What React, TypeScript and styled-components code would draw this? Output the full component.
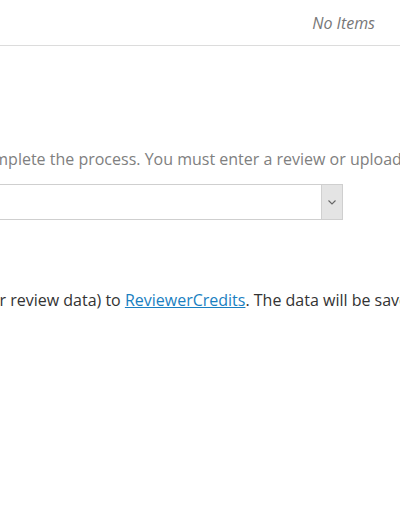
import styled, { createGlobalStyle } from 'styled-components';

const GlobalStyle = createGlobalStyle`
  html, body {
    margin: 0;
    padding: 0;
    background: #fff;
    overflow: hidden;
  }
  body {
    font-family: 'Open Sans', 'Noto Sans', sans-serif;
    font-size: 16px;
    color: #333;
  }
`;

const App = () => {
  return (
    <>
      <GlobalStyle />
      <Page>
        <TopBar>
          <CartStatus>No Items</CartStatus>
        </TopBar>

        <Content>
          <Hint shift={24}>complete the process. You must enter a review or upload a receipt.</Hint>

          <SelectWrap>
            <SelectField />
            <SelectButton>
              <svg width="8" height="5" viewBox="0 0 8 5" fill="none">
                <path d="M0.5 0.5 L4 4 L7.5 0.5" stroke="#666" strokeWidth="1.1" />
              </svg>
            </SelectButton>
          </SelectWrap>

          <Notice shift={28}>
            your review data) to <Link href="#">ReviewerCredits</Link>. The data will be saved securely.
          </Notice>
        </Content>
      </Page>
    </>
  );
};

export default App;

// region STYLES

const Page = styled.div`
  width: 400px;
  height: 516px;
  overflow: hidden;
`;

const TopBar = styled.div`
  height: 46px;
  border-bottom: 1px solid #dcdcdc;
  display: flex;
  align-items: center;
  justify-content: flex-end;
  padding-right: 25px;
  box-sizing: border-box;
`;

const CartStatus = styled.span`
  font-style: italic;
  font-size: 16px;
  color: #777;
`;

const Content = styled.div`
  display: flex;
  flex-direction: column;
  padding-top: 101px;
`;

const Hint = styled.p<{ shift: number }>`
  margin: 0 0 0 ${p => -p.shift}px;
  white-space: nowrap;
  line-height: 24px;
  color: #808080;
`;

const SelectWrap = styled.div`
  display: flex;
  margin: 13px 0 0 -20px;
  width: 363px;
  height: 36px;
  border: 1px solid #cfcfcf;
  box-sizing: border-box;
`;

const SelectField = styled.div`
  flex: 1;
  background: #fff;
`;

const SelectButton = styled.div`
  width: 20px;
  display: flex;
  align-items: center;
  justify-content: center;
  background: #e4e4e4;
  border-left: 1px solid #d0d0d0;
`;

const Notice = styled.p<{ shift: number }>`
  margin: 68px 0 0 ${p => -p.shift}px;
  white-space: nowrap;
  line-height: 24px;
  color: #333;
`;

const Link = styled.a`
  color: #1a7fc1;
  text-decoration: underline;
`;

// endregion
